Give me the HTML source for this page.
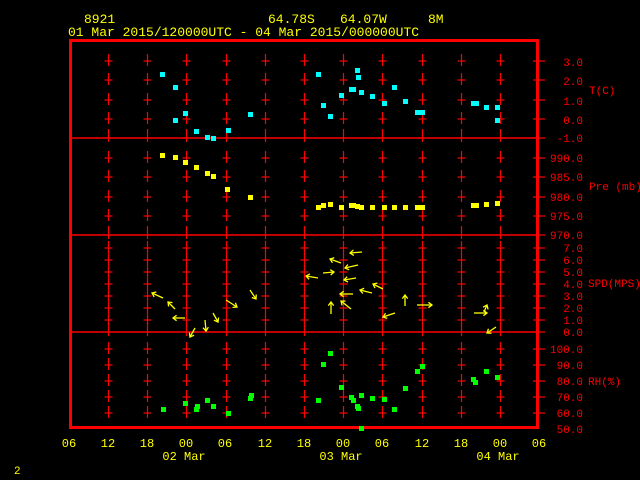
<!DOCTYPE html>
<html><head><meta charset="utf-8"><style>
html,body{margin:0;padding:0;background:#000;width:640px;height:480px;overflow:hidden}
svg{display:block}
text{font-family:"Liberation Mono","DejaVu Sans Mono",monospace}
</style></head><body>
<svg id="s" width="640" height="480" viewBox="0 0 640 480" xmlns="http://www.w3.org/2000/svg">
<defs>
<marker id="ah" markerUnits="userSpaceOnUse" markerWidth="10" markerHeight="10" refX="0" refY="5" orient="auto" viewBox="0 0 10 10">
<path d="M5 1 L0 5 L5 9" fill="none" stroke="#ff0" stroke-width="1.3"/>
</marker>
</defs>
<g fill="#ff0" font-size="13">
<text x="84" y="23">8921</text>
<text x="268" y="23">64.78S</text>
<text x="340" y="23">64.07W</text>
<text x="428" y="23">8M</text>
<text x="68" y="36">01 Mar 2015/120000UTC - 04 Mar 2015/000000UTC</text>
</g>
<g id="ticks" stroke="#f00" stroke-width="1.2"></g>
<g stroke="#f00" stroke-width="1.5">
<line x1="70" y1="138" x2="538" y2="138"/>
<line x1="70" y1="235" x2="538" y2="235"/>
<line x1="70" y1="332" x2="538" y2="332"/>
</g>
<rect x="70.5" y="40.5" width="467" height="387" fill="none" stroke="#f00" stroke-width="3"/>
<g fill="#f00" font-size="11" text-anchor="end">
<text x="583" y="66">3.0</text><text x="583" y="85">2.0</text><text x="583" y="105">1.0</text><text x="583" y="124">0.0</text><text x="583" y="142">-1.0</text>
<text x="583" y="162">990.0</text><text x="583" y="181">985.0</text><text x="583" y="201">980.0</text><text x="583" y="220">975.0</text><text x="583" y="239">970.0</text>
<text x="583" y="252">7.0</text><text x="583" y="264">6.0</text><text x="583" y="276">5.0</text><text x="583" y="288">4.0</text><text x="583" y="300">3.0</text><text x="583" y="312">2.0</text><text x="583" y="324">1.0</text><text x="583" y="336">0.0</text>
<text x="583" y="353">100.0</text><text x="583" y="369">90.0</text><text x="583" y="385">80.0</text><text x="583" y="401">70.0</text><text x="583" y="417">60.0</text><text x="583" y="433">50.0</text>
</g>
<g fill="#f00" font-size="11">
<text x="589" y="94">T(C)</text>
<text x="589" y="190">Pre (mb)</text>
<text x="588" y="287">SPD(MPS)</text>
<text x="588" y="385">RH(%)</text>
</g>
<g fill="#ff0" font-size="12" text-anchor="middle">
<text x="69" y="447">06</text><text x="108" y="447">12</text><text x="147" y="447">18</text><text x="186" y="447">00</text><text x="225" y="447">06</text><text x="265" y="447">12</text><text x="304" y="447">18</text><text x="343" y="447">00</text><text x="382" y="447">06</text><text x="422" y="447">12</text><text x="461" y="447">18</text><text x="500" y="447">00</text><text x="539" y="447">06</text>
<text x="184" y="460">02 Mar</text><text x="341" y="460">03 Mar</text><text x="498" y="460">04 Mar</text>
</g>
<text x="14" y="474" fill="#ff0" font-size="11">2</text>
<g id="cy" fill="#0ff"></g>
<g id="ye" fill="#ff0"></g>
<g id="gr" fill="#0f0"></g>
<g id="ar" stroke="#ff0" stroke-width="1.3" fill="none"></g>
</svg>
<script>
var NS="http://www.w3.org/2000/svg";
function el(p,t,a){var e=document.createElementNS(NS,t);for(var k in a)e.setAttribute(k,a[k]);p.appendChild(e);return e;}
var tk=document.getElementById("ticks");
var rows=[61,80,100,119,158,177,197,216,248,260,272,284,296,308,320,349,365,381,397,413];
var seps=[138,235,332];
for(var i=0;i<11;i++){var x=Math.round(108+39.2*i)+0.5;
 rows.forEach(function(y){el(tk,"line",{x1:x,y1:y-7,x2:x,y2:y+5});el(tk,"line",{x1:x-4,y1:y,x2:x+4,y2:y});});
 seps.forEach(function(y){el(tk,"line",{x1:x,y1:y-9,x2:x,y2:y+4});});
}
rows.concat(seps).forEach(function(y){el(tk,"line",{x1:533,y1:y,x2:545,y2:y});});
function pts(id,a){var g=document.getElementById(id);for(var i=0;i<a.length;i+=2)el(g,"rect",{x:a[i]-2,y:a[i+1]-2,width:5,height:5});}
pts("cy",[162,74,175,87,185,113,175,120,196,131,207,137,213,138,228,130,250,114,318,74,323,105,330,116,341,95,351,89,353,89,357,70,358,77,361,92,372,96,384,103,394,87,405,101,417,112,422,112,473,103,476,103,486,107,497,107,497,120]);
pts("ye",[162,155,175,157,185,162,196,167,207,173,213,176,227,189,250,197,318,207,323,205,330,204,341,207,351,205,353,205,357,206,361,207,372,207,384,207,394,207,405,207,417,207,422,207,473,205,476,205,486,204,497,203]);
pts("gr",[163,409,185,403,196,409,197,406,207,400,213,406,228,413,250,398,251,395,318,400,323,364,330,353,341,387,351,397,353,400,357,406,358,408,361,395,372,398,384,399,394,409,405,388,417,371,422,366,473,379,475,382,486,371,497,377,361,428]);
var ar=document.getElementById("ar");
[[362,252,350,253],[341,263,330,259],[358,265,345,268],[318,278,306,276],[323,273,334,272],[356,278,344,280],[372,293,360,290],[383,289,373,284],[353,294,340,294],[351,309,341,301],[331,314,331,302],[405,306,405,295],[417,305,432,305],[395,313,383,317],[474,313,487,313],[484,312,487,305],[496,327,487,333],[163,298,152,293],[175,309,168,302],[185,318,173,318],[195,328,190,337],[205,320,206,331],[213,313,218,322],[226,300,237,307],[250,290,256,299]].forEach(function(a){
 var dx=a[0]-a[2],dy=a[1]-a[3],L=Math.sqrt(dx*dx+dy*dy),ux=dx/L,uy=dy/L,h=4.5;
 el(ar,"line",{x1:a[0],y1:a[1],x2:a[2],y2:a[3]});
 el(ar,"path",{d:"M"+(a[2]+h*(ux*0.8-uy*0.6))+" "+(a[3]+h*(uy*0.8+ux*0.6))+" L"+a[2]+" "+a[3]+" L"+(a[2]+h*(ux*0.8+uy*0.6))+" "+(a[3]+h*(uy*0.8-ux*0.6))});
});
</script>
</body></html>
